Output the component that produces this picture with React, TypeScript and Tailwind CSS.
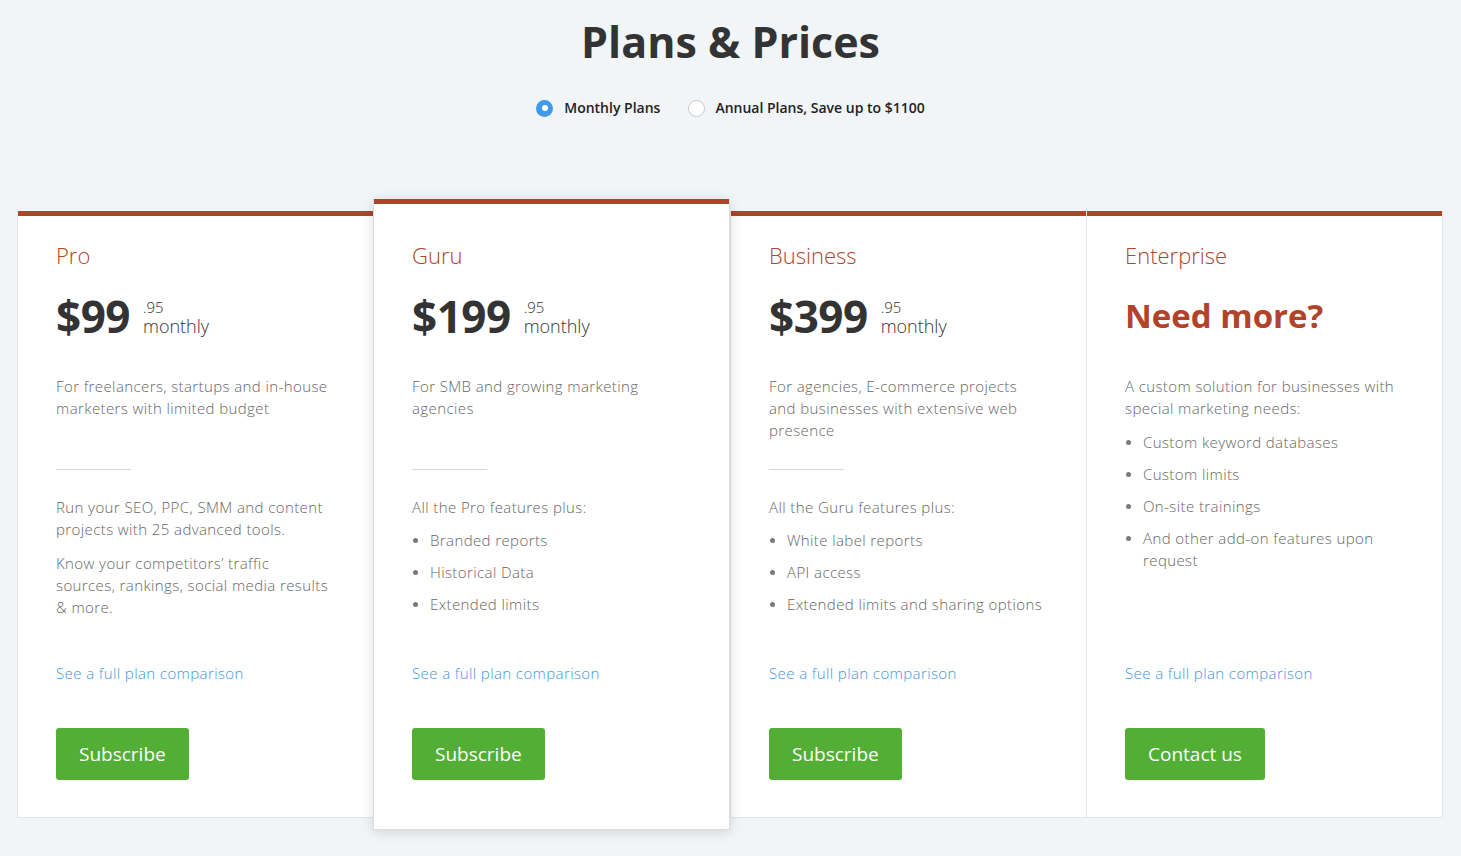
import React from "react";

type Plan = {
  name: string;
  price?: string;
  headline?: string;
  description: string;
  divider: boolean;
  paragraphs: string[];
  items: string[];
  button: string;
  featured?: boolean;
};

const plans: Plan[] = [
  {
    name: "Pro",
    price: "$99",
    description: "For freelancers, startups and in-house marketers with limited budget",
    divider: true,
    paragraphs: [
      "Run your SEO, PPC, SMM and content projects with 25 advanced tools.",
      "Know your competitors’ traffic sources, rankings, social media results & more.",
    ],
    items: [],
    button: "Subscribe",
  },
  {
    name: "Guru",
    price: "$199",
    description: "For SMB and growing marketing agencies",
    divider: true,
    paragraphs: ["All the Pro features plus:"],
    items: ["Branded reports", "Historical Data", "Extended limits"],
    button: "Subscribe",
    featured: true,
  },
  {
    name: "Business",
    price: "$399",
    description: "For agencies, E-commerce projects and businesses with extensive web presence",
    divider: true,
    paragraphs: ["All the Guru features plus:"],
    items: ["White label reports", "API access", "Extended limits and sharing options"],
    button: "Subscribe",
  },
  {
    name: "Enterprise",
    headline: "Need more?",
    description: "A custom solution for businesses with special marketing needs:",
    divider: false,
    paragraphs: [],
    items: [
      "Custom keyword databases",
      "Custom limits",
      "On-site trainings",
      "And other add-on features upon request",
    ],
    button: "Contact us",
  },
];

const Bullets: React.FC<{ items: string[] }> = ({ items }) => (
  <ul className="flex flex-col gap-[10px]">
    {items.map((item, i) => (
      <li key={i} className="flex items-start">
        <span className="w-[18px] shrink-0 flex pt-[9px] pl-[1px]">
          <span className="w-[5px] h-[5px] rounded-full bg-[#7a7a7a]" />
        </span>
        <span>{item}</span>
      </li>
    ))}
  </ul>
);

const PlanCard: React.FC<{ plan: Plan }> = ({ plan }) => {
  const enterprise = !plan.price;
  return (
    <div
      className={
        plan.featured
          ? "flex-1 relative z-10 -my-3 bg-white flex flex-col border border-t-0 border-[#d9dde0] shadow-[0_2px_12px_rgba(0,0,0,0.14)]"
          : "flex-1 bg-white flex flex-col border-l border-b border-[#e3e6e8] last:border-r"
      }
    >
      <div className="h-[5px] bg-[#b0432a]" />
      <div
        className={
          "flex flex-col flex-1 pl-[38px] pr-[43px] " +
          (plan.featured ? "pt-[37px] pb-[49px]" : "pt-[25px] pb-[37px]")
        }
      >
        <div className="text-[22px] leading-[28px] font-light text-[#b0432a]">{plan.name}</div>
        {enterprise ? (
          <div className="mt-[22px] h-[50px] flex items-center text-[33px] font-bold text-[#b0432a]">
            {plan.headline}
          </div>
        ) : (
          <div className="mt-[22px] h-[50px] flex items-center">
            <span className="text-[44px] leading-[50px] font-bold text-[#333] tracking-[-0.5px]">
              {plan.price}
            </span>
            <span className="ml-[13px] flex flex-col text-[#333] pt-[2px]">
              <span className="text-[15px] leading-[14px] font-light">.95</span>
              <span className="mt-[3px] text-[18px] leading-[18px] font-light">monthly</span>
            </span>
          </div>
        )}
        <div className="mt-[34px] flex-1 flex flex-col text-[15px] leading-[22px] font-light tracking-[0.4px] text-[#666]">
          <p className={enterprise ? "" : "h-[66px]"}>{plan.description}</p>
          {plan.divider && <div className="mt-[28px] w-[75px] h-px bg-[#d6d6d6]" />}
          <div className={plan.divider ? "mt-[26px] flex flex-col" : "mt-[12px] flex flex-col"}>
            {plan.paragraphs.map((p, i) => (
              <p key={i} className={i > 0 ? "mt-[12px]" : ""}>
                {p}
              </p>
            ))}
            {plan.items.length > 0 && (
              <div className={plan.paragraphs.length ? "mt-[11px]" : ""}>
                <Bullets items={plan.items} />
              </div>
            )}
          </div>
          <a href="#" className="mt-auto text-[#3d97e4] text-[15px] leading-[22px] font-light">
            See a full plan comparison
          </a>
        </div>
        <div className="mt-[44px]">
          <button className="h-[52px] px-[23px] rounded-[3px] bg-[#52ae34] text-white text-[19px] font-normal">
            {plan.button}
          </button>
        </div>
      </div>
    </div>
  );
};

export default function App() {
  return (
    <div
      className="min-h-[856px] bg-[#f1f5f8] pb-10"
      style={{ fontFamily: '"Open Sans", "Noto Sans", sans-serif' }}
    >
      <h1 className="pt-[14px] text-center text-[43px] leading-[56px] font-bold text-[#333]">
        Plans &amp; Prices
      </h1>
      <div className="mt-[28px] flex justify-center items-center gap-[28px] text-[14px] leading-[20px] font-semibold text-[#222]">
        <label className="flex items-center gap-[11px]">
          <span className="w-[17px] h-[17px] rounded-full bg-[#3f9bea] flex items-center justify-center">
            <span className="w-[6px] h-[6px] rounded-full bg-white" />
          </span>
          Monthly Plans
        </label>
        <label className="flex items-center gap-[10px]">
          <span className="w-[17px] h-[17px] rounded-full bg-white border border-[#c8c8c8]" />
          Annual Plans, Save up to $1100
        </label>
      </div>
      <div className="mt-[93px] h-[607px] flex pl-[17px] pr-[18px]">
        {plans.map((plan) => (
          <PlanCard key={plan.name} plan={plan} />
        ))}
      </div>
    </div>
  );
}
